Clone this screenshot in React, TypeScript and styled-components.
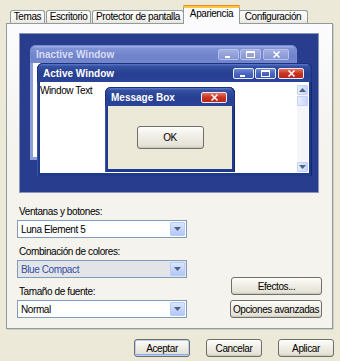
import React from "react";
import styled, { createGlobalStyle, css } from "styled-components";

const GlobalStyle = createGlobalStyle`
  html, body { margin: 0; padding: 0; background: #ece9d8; }
  body {
    font-family: "Liberation Sans", Arial, sans-serif;
    font-size: 10px;
    letter-spacing: -0.4px;
    color: #000;
  }
  * { box-sizing: border-box; }
`;

const Page = styled.div`
  width: 340px;
  height: 361px;
  background: #ece9d8;
  overflow: hidden;
`;

const TabStrip = styled.div`
  display: flex;
  align-items: flex-end;
  height: 24px;
  padding-left: 10px;
  position: relative;
  z-index: 2;
`;

const Tab = styled.div<{ $w: number; $active?: boolean }>`
  width: ${(p) => p.$w}px;
  height: ${(p) => (p.$active ? 19 : 13)}px;
  margin-bottom: ${(p) => (p.$active ? 0 : 1)}px;
  margin-right: 1px;
  border: 1px solid #919b9c;
  border-bottom: none;
  border-radius: 3px 3px 0 0;
  background: linear-gradient(#ffffff, #f3f2ec 70%, #e7e5dc);
  line-height: 12px;
  text-align: center;
  white-space: nowrap;
  overflow: hidden;
  ${(p) =>
    p.$active &&
    css`
      margin-left: -2px;
      margin-right: -2px;
      position: relative;
      z-index: 3;
      overflow: visible;
      border-top: 3px solid #ffc83c;
      background: #fcfcfe;
      padding-top: 0px;
      &::before {
        content: "";
        position: absolute;
        left: -1px;
        right: -1px;
        top: -3px;
        height: 1px;
        background: #e68b2c;
        border-radius: 3px 3px 0 0;
      }
    `}
`;

const Panel = styled.div`
  margin: -1px 0 0 6px;
  width: 327px;
  height: 306px;
  border: 1px solid #919b9c;
  background: linear-gradient(#fcfcfe, #f4f3ee 40%, #f4f3ee);
  box-shadow: 1px 1px 0 #d0cec2;
  display: flex;
  flex-direction: column;
  padding: 9px 9px 0 10px;
`;

const Preview = styled.div`
  margin-left: 2px;
  width: 300px;
  height: 160px;
  position: relative;
  background: #283d8e;
  border: 1px solid #8c95b6;
  flex: none;
`;

const Window = styled.div<{ $x: number; $y: number; $w: number; $h: number; $kind: "inactive" | "active" | "dialog" }>`
  position: absolute;
  left: ${(p) => p.$x}px;
  top: ${(p) => p.$y}px;
  width: ${(p) => p.$w}px;
  height: ${(p) => p.$h}px;
  display: flex;
  flex-direction: column;
  border-radius: 6px 6px 0 0;
  padding: 0 3px 3px;
  background: ${(p) => (p.$kind === "inactive" ? "#8d9dd8" : "#1f3a8c")};
  box-shadow: ${(p) => (p.$kind === "inactive" ? "none" : "inset 1px 0 0 #3b56a8, inset -1px 0 0 #14296a")};
`;

const TitleBar = styled.div<{ $inactive?: boolean; $h: number }>`
  height: ${(p) => p.$h}px;
  margin: 0 -3px;
  padding: 0 7px 0 5px;
  display: flex;
  align-items: center;
  border-radius: 6px 6px 0 0;
  flex: none;
  background: ${(p) =>
    p.$inactive
      ? "linear-gradient(#a4b2e6 0%, #7f91d5 15%, #6f82ca 60%, #7487cd 100%)"
      : "linear-gradient(#5b78cf 0%, #34509f 14%, #263f92 55%, #2a4497 100%)"};
  border: 1px solid ${(p) => (p.$inactive ? "#7a8cd0" : "#1a3380")};
  border-bottom: none;
`;

const TitleText = styled.span<{ $inactive?: boolean }>`
  flex: 1;
  font-family: "Liberation Sans", "DejaVu Sans", sans-serif;
  font-weight: bold;
  font-size: 10px;
  letter-spacing: 0;
  color: ${(p) => (p.$inactive ? "#d7ddf5" : "#ffffff")};
  white-space: nowrap;
  overflow: hidden;
`;

const TitleButtons = styled.div`
  display: flex;
  gap: 1px;
`;

const CapButton = styled.div<{ $kind: "min" | "max" | "close"; $inactive?: boolean }>`
  width: ${(p) => (p.$kind === "close" ? 26 : 21)}px;
  height: 11px;
  border: 1px solid ${(p) => (p.$inactive ? "#b5c1ec" : "#e6ecfb")};
  border-radius: 2px;
  display: flex;
  align-items: center;
  justify-content: center;
  margin-left: ${(p) => (p.$kind === "close" ? 1 : 0)}px;
  background: ${(p) =>
    p.$kind === "close"
      ? p.$inactive
        ? "linear-gradient(#a3afe0, #8595d3)"
        : "linear-gradient(#e8705c, #c9331f 50%, #b52a1a)"
      : p.$inactive
      ? "linear-gradient(#a3afe0, #8595d3)"
      : "linear-gradient(#6e8ad9, #4a66c0 50%, #3c57b0)"};
`;

const WinBody = styled.div`
  flex: 1;
  background: #fff;
  display: flex;
  min-height: 0;
`;

const WinText = styled.div`
  flex: 1;
  padding: 3px 0 0 0;
  line-height: 12px;
  white-space: nowrap;
`;

const ScrollBar = styled.div`
  width: 11px;
  margin: 3px 1px 1px 0;
  background: #f5f6f9;
  display: flex;
  flex-direction: column;
  justify-content: space-between;
`;

const ScrollTop = styled.div`
  display: flex;
  flex-direction: column;
  gap: 1px;
`;

const ScrollPart = styled.div`
  height: 10px;
  border: 1px solid #c3d1f4;
  border-radius: 1px;
  background: linear-gradient(90deg, #e6edfd, #c8d6fa);
  display: flex;
  align-items: center;
  justify-content: center;
`;

const DialogBody = styled.div`
  flex: 1;
  background: #ece9d8;
  display: flex;
  align-items: center;
  justify-content: center;
`;

const XpButton = styled.button<{ $w: number; $h: number; $default?: boolean }>`
  width: ${(p) => p.$w}px;
  height: ${(p) => p.$h}px;
  padding: 0;
  font-family: inherit;
  font-size: 10px;
  letter-spacing: -0.4px;
  color: #000;
  border: 1px solid #6f6f6a;
  border-radius: 3px;
  background: linear-gradient(#fdfdfb, #f1efe7 40%, #e6e3d8 85%, #d6d2c4);
  box-shadow: ${(p) =>
    p.$default ? "inset 0 0 0 1px #bcd0f4, inset 0 -1px 0 1px #8eaae8" : "inset 0 -1px 0 #d0ccbd"};
  white-space: nowrap;
  cursor: default;
`;

const Form = styled.div`
  display: flex;
  justify-content: space-between;
  align-items: flex-end;
  padding-top: 12px;
`;

const Fields = styled.div`
  display: flex;
  flex-direction: column;
  gap: 7px;
`;

const Field = styled.div`
  display: flex;
  flex-direction: column;
  gap: 2px;
`;

const Label = styled.div`
  line-height: 13px;
  padding-left: 2px;
  white-space: nowrap;
`;

const Select = styled.div<{ $muted?: boolean }>`
  width: 170px;
  height: 18px;
  border: 1px solid #7f9db9;
  background: ${(p) => (p.$muted ? "#e3e4e8" : "#fff")};
  color: ${(p) => (p.$muted ? "#2f4fa3" : "#000")};
  display: flex;
  align-items: center;
  padding: 1px 1px 1px 3px;
`;

const SelectText = styled.span`
  flex: 1;
  line-height: 13px;
  white-space: nowrap;
`;

const DropButton = styled.div`
  width: 15px;
  height: 100%;
  border: 1px solid #b9cbf3;
  border-radius: 1px;
  background: linear-gradient(#dbe5fd, #c2d3fb 60%, #b3c7f6);
  display: flex;
  align-items: center;
  justify-content: center;
`;

const SideButtons = styled.div`
  display: flex;
  flex-direction: column;
  align-items: flex-end;
  gap: 5px;
  padding-right: 1px;
`;

const Footer = styled.div`
  display: flex;
  justify-content: flex-end;
  gap: 16px;
  padding: 10px 6px 0 0;
`;

const Arrow: React.FC<{ down?: boolean; color?: string }> = ({ down = true, color = "#4d6185" }) => (
  <svg width="7" height="4" viewBox="0 0 7 4">
    {down ? <path d="M0 0 H7 L3.5 4 Z" fill={color} /> : <path d="M0 4 H7 L3.5 0 Z" fill={color} />}
  </svg>
);

const Glyph: React.FC<{ kind: "min" | "max" | "close" }> = ({ kind }) => (
  <svg width="9" height="7" viewBox="0 0 9 7">
    {kind === "min" && <rect x="1" y="5" width="5" height="2" fill="#fff" />}
    {kind === "max" && (
      <>
        <rect x="0.5" y="0.5" width="8" height="6" fill="none" stroke="#fff" strokeWidth="1" />
        <rect x="0" y="0" width="9" height="2" fill="#fff" />
      </>
    )}
    {kind === "close" && <path d="M1.5 0.5 L7.5 6.5 M7.5 0.5 L1.5 6.5" stroke="#fff" strokeWidth="1.5" />}
  </svg>
);

const Caps: React.FC<{ inactive?: boolean; closeOnly?: boolean }> = ({ inactive, closeOnly }) => (
  <TitleButtons>
    {!closeOnly && (
      <>
        <CapButton $kind="min" $inactive={inactive}>
          <Glyph kind="min" />
        </CapButton>
        <CapButton $kind="max" $inactive={inactive}>
          <Glyph kind="max" />
        </CapButton>
      </>
    )}
    <CapButton $kind="close" $inactive={inactive}>
      <Glyph kind="close" />
    </CapButton>
  </TitleButtons>
);

const tabs = [
  { label: "Temas", w: 35 },
  { label: "Escritorio", w: 45 },
  { label: "Protector de pantalla", w: 92 },
  { label: "Apariencia", w: 57, active: true },
  { label: "Configuración", w: 70 },
];

const fields = [
  { label: "Ventanas y botones:", value: "Luna Element 5" },
  { label: "Combinación de colores:", value: "Blue Compact", muted: true },
  { label: "Tamaño de fuente:", value: "Normal" },
];

export default function App() {
  return (
    <Page>
      <GlobalStyle />
      <TabStrip>
        {tabs.map((t) => (
          <Tab key={t.label} $w={t.w} $active={t.active}>
            {t.label}
          </Tab>
        ))}
      </TabStrip>
      <Panel>
        <Preview>
          <Window $kind="inactive" $x={10} $y={11} $w={267} $h={115}>
            <TitleBar $inactive $h={18}>
              <TitleText $inactive>Inactive Window</TitleText>
              <Caps inactive />
            </TitleBar>
            <WinBody />
          </Window>
          <Window $kind="active" $x={17} $y={29} $w={275} $h={113}>
            <TitleBar $h={19}>
              <TitleText>Active Window</TitleText>
              <Caps />
            </TitleBar>
            <WinBody>
              <WinText>Window Text</WinText>
              <ScrollBar>
                <ScrollTop>
                  <ScrollPart>
                    <Arrow down={false} />
                  </ScrollPart>
                  <ScrollPart />
                </ScrollTop>
                <ScrollPart>
                  <Arrow />
                </ScrollPart>
              </ScrollBar>
            </WinBody>
          </Window>
          <Window $kind="dialog" $x={85} $y={53} $w={130} $h={85}>
            <TitleBar $h={19}>
              <TitleText>Message Box</TitleText>
              <Caps closeOnly />
            </TitleBar>
            <DialogBody>
              <XpButton $w={67} $h={23}>OK</XpButton>
            </DialogBody>
          </Window>
        </Preview>
        <Form>
          <Fields>
            {fields.map((f) => (
              <Field key={f.label}>
                <Label>{f.label}</Label>
                <Select $muted={f.muted}>
                  <SelectText>{f.value}</SelectText>
                  <DropButton>
                    <Arrow />
                  </DropButton>
                </Select>
              </Field>
            ))}
          </Fields>
          <SideButtons>
            <XpButton $w={91} $h={18}>Efectos...</XpButton>
            <XpButton $w={92} $h={18}>Opciones avanzadas</XpButton>
          </SideButtons>
        </Form>
      </Panel>
      <Footer>
        <XpButton $w={56} $h={18} $default>Aceptar</XpButton>
        <XpButton $w={56} $h={18}>Cancelar</XpButton>
        <XpButton $w={56} $h={18}>Aplicar</XpButton>
      </Footer>
    </Page>
  );
}
